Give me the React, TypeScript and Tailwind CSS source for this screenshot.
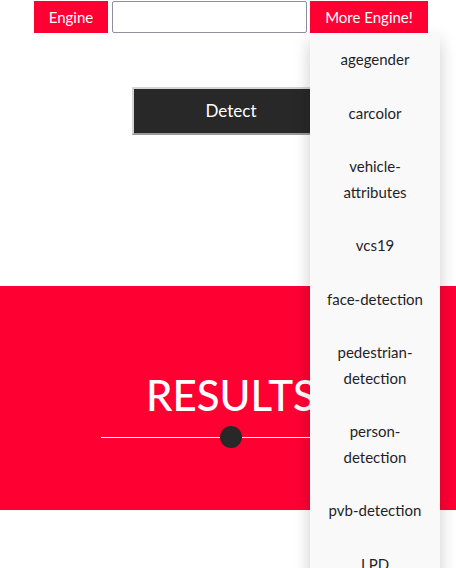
import React from 'react';

const engines: string[][] = [
  ['agegender'],
  ['carcolor'],
  ['vehicle-', 'attributes'],
  ['vcs19'],
  ['face-detection'],
  ['pedestrian-', 'detection'],
  ['person-', 'detection'],
  ['pvb-detection'],
  ['LPD'],
  ['more'],
];

const App: React.FC = () => {
  return (
    <div className="min-h-screen bg-white pt-px font-['Lato','Liberation_Sans',sans-serif] text-[15px]">
      {/* barra superior */}
      <div className="flex justify-center pl-[6px] relative z-20">
        <button className="w-[74px] h-8 bg-[#ff0033] text-white">Engine</button>
        <input className="ml-1 w-[195px] h-8 border border-[#8f8f9d] rounded-[2px] bg-white" />
        <div className="relative ml-[3px]">
          <button className="w-[118px] h-8 bg-[#ff0033] text-white">More Engine!</button>
          <div className="absolute top-full left-0 w-[130px] bg-[#f9f9f9] shadow-[0_8px_16px_0_rgba(0,0,0,0.2)] text-[#1f1f2a]">
            {engines.map((lines, i) => (
              <div key={i} className="px-4 py-[14px] leading-[25.5px] text-center whitespace-nowrap">
                {lines.map((l, j) => (
                  <div key={j}>{l}</div>
                ))}
              </div>
            ))}
          </div>
        </div>
      </div>

      <div className="mt-[54px] flex justify-center pl-[6px]">
        <button className="w-[198px] h-12 bg-[#282828] text-white text-[17px] border-2 border-t-[#d4d4d4] border-l-[#d4d4d4] border-b-[#9a9a9a] border-r-[#9a9a9a]">
          Detect
        </button>
      </div>

      {/* resultados */}
      <div className="mt-[151px] h-[224px] bg-[#ff0033] pt-[88px] flex flex-col items-center pl-[6px]">
        <h2 className="text-[42px] leading-[42px] text-white font-medium">RESULTS</h2>
        <div className="mt-[10px] w-[260px] h-[22px] flex items-center">
          <div className="flex-1 h-px bg-white"></div>
          <div className="w-[22px] h-[22px] rounded-full bg-[#282828]"></div>
          <div className="flex-1 h-px bg-white"></div>
        </div>
      </div>
    </div>
  );
};

export default App;
